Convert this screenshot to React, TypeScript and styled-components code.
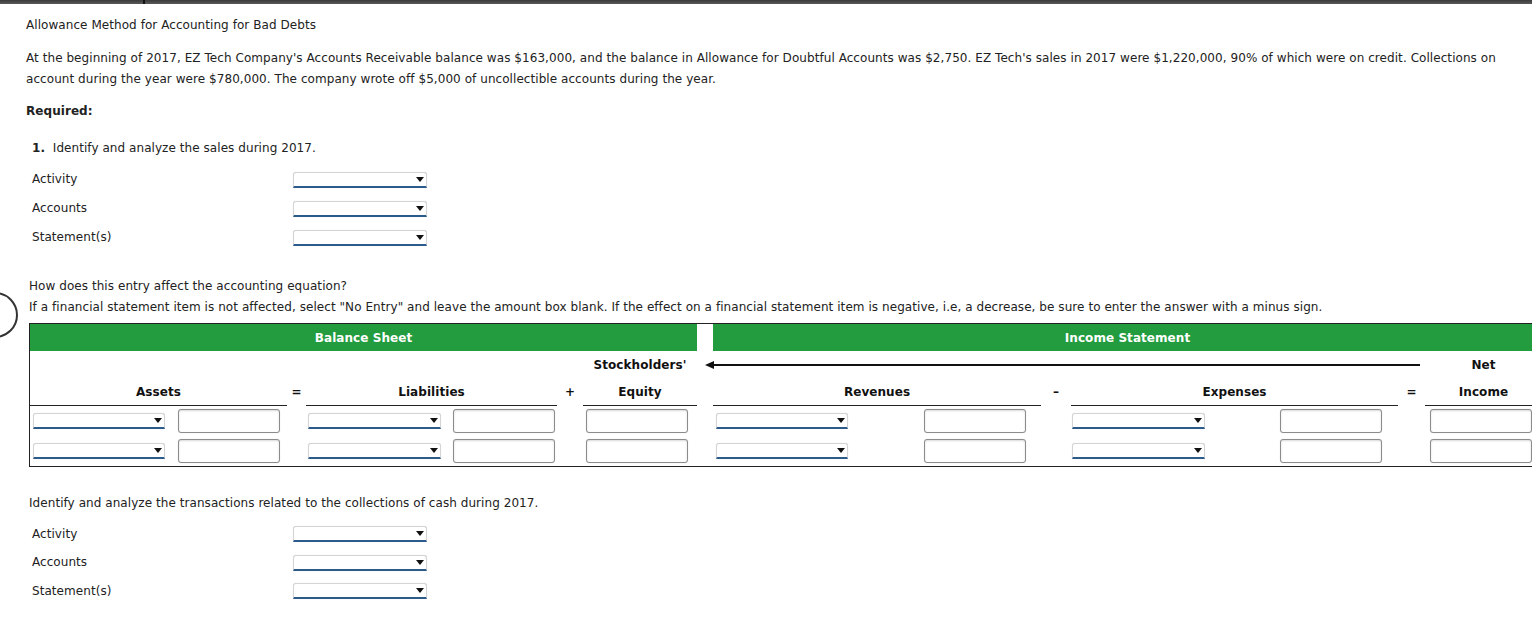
import React from 'react';
import styled, {createGlobalStyle} from "styled-components";

const GlobalStyle = createGlobalStyle`
  html, body {
    margin: 0;
    padding: 0;
    background: #ffffff;
    overflow: hidden;
  }
  body {
    font-family: "DejaVu Sans", Verdana, sans-serif;
    font-size: 12px;
    letter-spacing: 0.06px;
    color: #222;
  }
`

const colWidths = [142, 115, 19, 141, 110, 26, 114, 16, 187, 141, 30, 189, 138, 27, 117]

const Dropdown = ({width = 134}: { width?: number }) => (
    <Select style={{width}}/>
)

export default function App() {
    return (
        <Page>
            <GlobalStyle/>
            <TopBar>
                <BarSegment $w={143}/>
                <BarTick/>
                <BarSegment/>
            </TopBar>
            <Ring/>
            <Content>
                <Title>Allowance Method for Accounting for Bad Debts</Title>
                <Para>
                    At the beginning of 2017, EZ Tech Company's Accounts Receivable balance was $163,000, and the balance in
                    Allowance for Doubtful Accounts was $2,750. EZ Tech's sales in 2017 were $1,220,000, 90% of which were on
                    credit. Collections on account during the year were $780,000. The company wrote off $5,000 of uncollectible
                    accounts during the year.
                </Para>
                <Required>Required:</Required>

                <Question><b>1.</b>&nbsp; Identify and analyze the sales during 2017.</Question>
                <FormList>
                    <FormRow><Label>Activity</Label><Dropdown/></FormRow>
                    <FormRow><Label>Accounts</Label><Dropdown/></FormRow>
                    <FormRow><Label>Statement(s)</Label><Dropdown/></FormRow>
                </FormList>

                <Instructions>
                    <p>How does this entry affect the accounting equation?</p>
                    <p>If a financial statement item is not affected, select "No Entry" and leave the amount box blank. If the
                        effect on a financial statement item is negative, i.e, a decrease, be sure to enter the answer with a minus
                        sign.</p>
                </Instructions>

                <EquationTable>
                    <GreenHead $from={1} $to={8}>Balance Sheet</GreenHead>
                    <GapCell/>
                    <GreenHead $from={9} $to={16}>Income Statement</GreenHead>

                    <HeadCell $from={1} $to={7}/>
                    <HeadCell $from={7} $to={8}>Stockholders'</HeadCell>
                    <ArrowCell>
                        <ArrowHead/>
                        <ArrowLine/>
                    </ArrowCell>
                    <HeadCell $from={15} $to={16}>Net</HeadCell>

                    <ColHead $from={1} $to={3} $line>Assets</ColHead>
                    <ColHead $from={3} $to={4}>=</ColHead>
                    <ColHead $from={4} $to={6} $line>Liabilities</ColHead>
                    <ColHead $from={6} $to={7}>+</ColHead>
                    <ColHead $from={7} $to={8} $line>Equity</ColHead>
                    <ColHead $from={8} $to={9}/>
                    <ColHead $from={9} $to={11} $line>Revenues</ColHead>
                    <ColHead $from={11} $to={12}>–</ColHead>
                    <ColHead $from={12} $to={14} $line>Expenses</ColHead>
                    <ColHead $from={14} $to={15}>=</ColHead>
                    <ColHead $from={15} $to={16} $line>Income</ColHead>

                    {[0, 1].map(r => (
                        <React.Fragment key={r}>
                            <Cell $pad={3}><Dropdown width={132}/></Cell>
                            <Cell $pad={6}><Amount/></Cell>
                            <Cell/>
                            <Cell $pad={2}><Dropdown width={133}/></Cell>
                            <Cell $pad={6}><Amount/></Cell>
                            <Cell/>
                            <Cell $pad={3}><Amount/></Cell>
                            <Cell/>
                            <Cell $pad={3}><Dropdown width={132}/></Cell>
                            <Cell $pad={24}><Amount/></Cell>
                            <Cell/>
                            <Cell $pad={1}><Dropdown width={133}/></Cell>
                            <Cell $pad={20}><Amount/></Cell>
                            <Cell/>
                            <Cell $pad={5}><Amount/></Cell>
                        </React.Fragment>
                    ))}
                </EquationTable>

                <SubQuestion>Identify and analyze the transactions related to the collections of cash during 2017.</SubQuestion>
                <FormList>
                    <FormRow $h={28.5}><Label>Activity</Label><Dropdown/></FormRow>
                    <FormRow $h={28.5}><Label>Accounts</Label><Dropdown/></FormRow>
                    <FormRow $h={28.5}><Label>Statement(s)</Label><Dropdown/></FormRow>
                </FormList>
            </Content>
        </Page>
    );
}

const Page = styled.div`
  position: relative;
  width: 1532px;
  height: 619px;
  overflow: hidden;
`
const TopBar = styled.div`
  display: flex;
  height: 4px;
`
const BarSegment = styled.div<{ $w?: number }>`
  ${p => p.$w ? `width: ${p.$w}px;` : 'flex: 1;'}
  background: linear-gradient(#3a3a3a, #5a5a5a);
`
const BarTick = styled.div`
  width: 2px;
  background: #111;
`
const Ring = styled.div`
  position: absolute;
  left: -28px;
  top: 292px;
  width: 42px;
  height: 42px;
  border: 2.5px solid #333;
  border-radius: 50%;
`
const Content = styled.div`
  padding: 0 0 0 26px;
  line-height: 21px;
`
const Title = styled.div`
  margin-top: 11px;
`
const Para = styled.p`
  margin: 12px 0 0;
  width: 1490px;
`
const Required = styled.div`
  margin-top: 11px;
  font-weight: bold;
`
const Question = styled.div`
  margin-top: 16px;
  padding-left: 6px;
`
const FormList = styled.div`
  margin-top: 6px;
  padding-left: 6px;
`
const FormRow = styled.div<{ $h?: number }>`
  display: flex;
  align-items: center;
  height: ${p => p.$h ?? 29}px;
`
const Label = styled.span`
  width: 261px;
`
const Select = styled.div`
  position: relative;
  box-sizing: border-box;
  height: 16px;
  background: #fff;
  border: 1px solid #d4d4d4;
  border-bottom: 2px solid #2c5a8a;
  border-radius: 3px 3px 0 0;
  box-shadow: 0 0 1px rgba(0, 0, 0, 0.15);

  &::after {
    content: '';
    position: absolute;
    right: 2px;
    top: 4px;
    border-left: 4px solid transparent;
    border-right: 4px solid transparent;
    border-top: 5px solid #111;
  }
`
const Instructions = styled.div`
  margin-top: 24px;
  padding-left: 3px;

  p {
    margin: 0;
  }
`
const EquationTable = styled.div`
  margin: 5px 0 0 3px;
  display: grid;
  grid-template-columns: ${colWidths.map(w => w + 'px').join(' ')};
  grid-template-rows: 27px 27px 28px 30px 30px;
  border-top: 1px solid #222;
  border-left: 1px solid #222;
  border-bottom: 1px solid #222;
  width: 1513px;
  font-size: 12px;
  line-height: 16px;
`
const GreenHead = styled.div<{ $from: number, $to: number }>`
  grid-column: ${p => p.$from} / ${p => p.$to};
  background: #229c3e;
  color: #fff;
  font-weight: bold;
  display: flex;
  align-items: center;
  justify-content: center;
`
const GapCell = styled.div`
  grid-column: 8 / 9;
  background: #fff;
`
const HeadCell = styled.div<{ $from: number, $to: number }>`
  grid-column: ${p => p.$from} / ${p => p.$to};
  font-weight: bold;
  color: #111;
  display: flex;
  align-items: center;
  justify-content: center;
`
const ArrowCell = styled.div`
  grid-column: 8 / 15;
  display: flex;
  align-items: center;
  padding: 0 5px 0 8px;
`
const ArrowHead = styled.div`
  width: 0;
  height: 0;
  border-top: 4px solid transparent;
  border-bottom: 4px solid transparent;
  border-right: 9px solid #111;
`
const ArrowLine = styled.div`
  flex: 1;
  height: 2px;
  background: #111;
`
const ColHead = styled.div<{ $from: number, $to: number, $line?: boolean }>`
  grid-column: ${p => p.$from} / ${p => p.$to};
  font-weight: bold;
  color: #111;
  display: flex;
  align-items: center;
  justify-content: center;
  border-bottom: 1px solid ${p => p.$line ? '#222' : 'transparent'};
`
const Cell = styled.div<{ $pad?: number }>`
  display: flex;
  align-items: center;
  padding-left: ${p => p.$pad ?? 0}px;
`
const Amount = styled.input.attrs({type: 'text'})`
  box-sizing: border-box;
  width: 102px;
  height: 24px;
  border: 1px solid #8c8c8c;
  border-radius: 3px;
  box-shadow: inset 0 1px 2px rgba(0, 0, 0, 0.15), 0 0 1px rgba(0, 0, 0, 0.2);
  background: #fff;
  padding: 0 4px;
  font: inherit;
`
const SubQuestion = styled.div`
  margin-top: 26px;
  padding-left: 3px;
`
